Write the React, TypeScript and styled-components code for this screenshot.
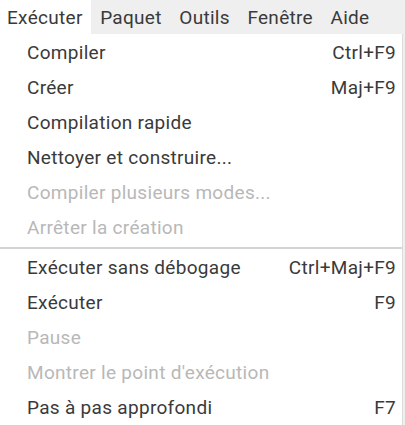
import React from "react";
import styled, { createGlobalStyle } from "styled-components";

const GlobalStyle = createGlobalStyle`
  body {
    margin: 0;
    background: #efefef;
    font-family: Roboto, "Liberation Sans", sans-serif;
    letter-spacing: 0.3px;
  }
`;

const MenuBar = styled.div`
  display: flex;
  height: 34px;
  background: #efefef;
`;

const MenuTitle = styled.div<{ $open?: boolean }>`
  display: flex;
  align-items: center;
  padding: 0 8.5px 0 9px;
  font-size: 19px;
  color: #3a3a3a;
  background: ${(p) => (p.$open ? "#ffffff" : "transparent")};
  &:first-child {
    padding-left: 7px;
  }
`;

const Dropdown = styled.div`
  width: 402px;
  background: #ffffff;
  border-right: 1px solid #dcdcdc;
  padding-top: 1px;
`;

const Item = styled.div<{ $disabled?: boolean }>`
  display: flex;
  align-items: center;
  justify-content: space-between;
  height: 35px;
  padding: 0 6px 0 27px;
  font-size: 19px;
  color: ${(p) => (p.$disabled ? "#b8b8b8" : "#3a3a3a")};
`;

const Shortcut = styled.span`
  color: #3a3a3a;
`;

const Separator = styled.div`
  height: 5px;
  display: flex;
  align-items: center;
  &::before {
    content: "";
    flex: 1;
    height: 2px;
    background: #d4d4d4;
  }
`;

interface Entry {
  label?: string;
  shortcut?: string;
  disabled?: boolean;
  separator?: boolean;
}

const titles = ["Exécuter", "Paquet", "Outils", "Fenêtre", "Aide"];

const entries: Entry[] = [
  { label: "Compiler", shortcut: "Ctrl+F9" },
  { label: "Créer", shortcut: "Maj+F9" },
  { label: "Compilation rapide" },
  { label: "Nettoyer et construire..." },
  { label: "Compiler plusieurs modes...", disabled: true },
  { label: "Arrêter la création", disabled: true },
  { separator: true },
  { label: "Exécuter sans débogage", shortcut: "Ctrl+Maj+F9" },
  { label: "Exécuter", shortcut: "F9" },
  { label: "Pause", disabled: true },
  { label: "Montrer le point d'exécution", disabled: true },
  { label: "Pas à pas approfondi", shortcut: "F7" },
];

export default function App() {
  return (
    <>
      <GlobalStyle />
      <MenuBar>
        {titles.map((t, i) => (
          <MenuTitle key={t} $open={i === 0}>
            {t}
          </MenuTitle>
        ))}
      </MenuBar>
      <Dropdown>
        {entries.map((e, i) =>
          e.separator ? (
            <Separator key={i} />
          ) : (
            <Item key={i} $disabled={e.disabled}>
              <span>{e.label}</span>
              {e.shortcut && <Shortcut>{e.shortcut}</Shortcut>}
            </Item>
          )
        )}
      </Dropdown>
    </>
  );
}
